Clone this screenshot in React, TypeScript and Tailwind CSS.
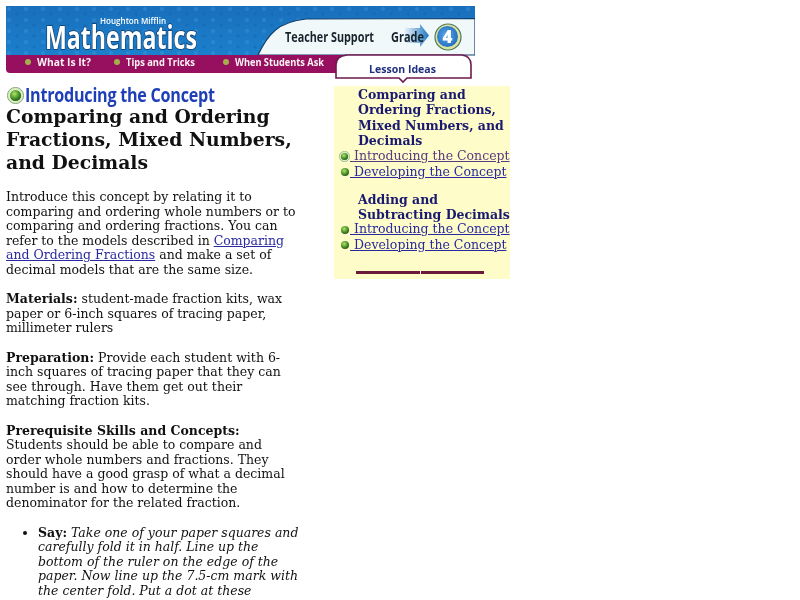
import React from "react";

function Ball({ size = 10, ring = false }: { size?: number; ring?: boolean }) {
  const id = ring ? "ballRing" + size : "ballPlain";
  return (
    <svg width={size} height={size} viewBox="0 0 20 20" className="shrink-0">
      <defs>
        <radialGradient id={id} cx="0.4" cy="0.35" r="0.7">
          <stop offset="0" stopColor="#b6e26a" />
          <stop offset="0.55" stopColor="#4f9a2c" />
          <stop offset="1" stopColor="#1f4d1c" />
        </radialGradient>
      </defs>
      {ring && <circle cx="10" cy="10" r="9.5" fill="#dcefc4" stroke="#6f9a63" strokeWidth="1" />}
      <circle cx="10" cy="10" r={ring ? 6.5 : 8} fill={`url(#${id})`} />
    </svg>
  );
}

const ban = "'Open Sans', sans-serif";

function Banner() {
  return (
    <svg width="470" height="82" viewBox="0 0 470 82" className="block">
      <defs>
        <linearGradient id="bb" x1="0" y1="0" x2="0" y2="1">
          <stop offset="0" stopColor="#1a6fbc" />
          <stop offset="1" stopColor="#1b80cc" />
        </linearGradient>
        <pattern id="mott" width="17" height="11" patternUnits="userSpaceOnUse">
          <circle cx="3" cy="3" r="2" fill="#4fa3e2" opacity="0.3" />
          <circle cx="11" cy="8" r="1.8" fill="#0f5ea8" opacity="0.35" />
        </pattern>
        <radialGradient id="four" cx="0.45" cy="0.45" r="0.6">
          <stop offset="0" stopColor="#5fa8e6" />
          <stop offset="1" stopColor="#1f6cc0" />
        </radialGradient>
        <linearGradient id="arrow" x1="0" y1="0" x2="1" y2="0">
          <stop offset="0" stopColor="#ffffff" />
          <stop offset="1" stopColor="#2078c4" />
        </linearGradient>
      </defs>
      <rect x="0" y="0" width="469" height="49" fill="url(#bb)" />
      <rect x="0" y="0" width="469" height="49" fill="url(#mott)" />
      <path d="M252 49 C262 28 272 16 300 13 L469 12.5 L469 49 Z" fill="#f1f8fa" stroke="#12406f" strokeWidth="1.2" />
      <rect x="469" y="12" width="2" height="38" fill="#ffffff" />
      <path d="M0 49 H341 V67 H4 Q0 67 0 63 Z" fill="#96105f" />
      <text x="94" y="18" fontFamily={ban} fontSize="8" fill="#ffffff" fontWeight="600" textLength="66" lengthAdjust="spacingAndGlyphs">Houghton Mifflin</text>
      <text x="39" y="43" fontFamily={ban} fontSize="33" fill="#ffffff" fontWeight="700" textLength="152" lengthAdjust="spacingAndGlyphs" stroke="#0d3a6b" strokeWidth="1.6" style={{ paintOrder: "stroke" }}>Mathematics</text>
      <text x="279" y="36" fontFamily={ban} fontSize="14.5" fill="#17232c" fontWeight="700" textLength="89" lengthAdjust="spacingAndGlyphs">Teacher Support</text>
      <path d="M396 22 H414 V18 L423 29.5 L414 41 V37 H396 Z" fill="url(#arrow)" />
      <text x="385" y="36" fontFamily={ban} fontSize="14" fill="#17232c" fontWeight="700" textLength="33" lengthAdjust="spacingAndGlyphs">Grade</text>
      <circle cx="442" cy="31" r="13" fill="#dfe3a0" stroke="#4a7a5a" strokeWidth="1.2" />
      <circle cx="441.5" cy="30.5" r="10.5" fill="url(#four)" />
      <text x="441.5" y="37" textAnchor="middle" fontFamily={ban} fontSize="17" fill="#ffffff" fontWeight="800">4</text>
      {[22, 111, 220].map((x) => (
        <circle key={x} cx={x} cy={56} r="3" fill="#a5ad4c" />
      ))}
      <text x="31" y="60" fontFamily={ban} fontSize="11" fill="#fdf3f5" fontWeight="700" textLength="54" lengthAdjust="spacingAndGlyphs">What Is It?</text>
      <text x="120" y="60" fontFamily={ban} fontSize="11" fill="#fdf3f5" fontWeight="700" textLength="69" lengthAdjust="spacingAndGlyphs">Tips and Tricks</text>
      <text x="229" y="60" fontFamily={ban} fontSize="11" fill="#fdf3f5" fontWeight="700" textLength="89" lengthAdjust="spacingAndGlyphs">When Students Ask</text>
      <path d="M330 72 V59 Q330 50 341 49 H456 Q465 50 465 59 V72 H401 L397 76 L393 72 Z" fill="#ffffff" stroke="#6e1a4e" strokeWidth="1.6" />
      <text x="363" y="67" fontFamily={ban} fontSize="10.5" fill="#20307f" fontWeight="700" textLength="67" lengthAdjust="spacingAndGlyphs">Lesson Ideas</text>
    </svg>
  );
}

function NavLink({ text, current, ring }: { text: string; current?: boolean; ring?: boolean }) {
  return (
    <div className={`flex items-center h-[15.2px] whitespace-nowrap ${ring ? "-ml-[19px] mt-[1px]" : "-ml-[18px]"}`}>
      <Ball size={ring ? 11 : 10} ring={ring} />
      <a href="#" className={`underline ${current ? "text-[#5a3a80]" : "text-[#2a2aa0]"}`}>
        {"\u00a0"}
        {text}
      </a>
    </div>
  );
}

export default function App() {
  return (
    <div className="w-[800px] h-[600px] overflow-hidden bg-white font-['DejaVu_Serif',serif] text-[12.5px] leading-[14.6px] text-[#111] pt-[6px] pl-[6px] blur-[0.4px]">
      <Banner />
      <div className="flex items-start -mt-[2px]">
        <div className="w-[300px] shrink-0 whitespace-nowrap">
          <div className="flex items-center gap-[1px] h-[24px] -mt-[3px] ml-[1px]">
            <Ball size={17} ring />
            <span className="inline-block origin-left scale-x-[0.85] font-['Open_Sans',sans-serif] font-bold text-[19px] tracking-[-0.3px] text-[#1f3fb8]">Introducing the Concept</span>
          </div>
          <h1 className="font-bold text-[18.8px] leading-[23px] -mt-[2px]">
            Comparing and Ordering<br />Fractions, Mixed Numbers,<br />and Decimals
          </h1>
          <p className="mt-[16px]">
            Introduce this concept by relating it to<br />comparing and ordering whole numbers or to<br />comparing and ordering fractions. You can<br />refer to the models described in <a href="#" className="underline text-[#2a2aa0]">Comparing<br />and Ordering Fractions</a> and make a set of<br />decimal models that are the same size.
          </p>
          <p className="mt-[14.6px]">
            <b>Materials:</b> student-made fraction kits, wax<br />paper or 6-inch squares of tracing paper,<br />millimeter rulers
          </p>
          <p className="mt-[14.6px]">
            <b>Preparation:</b> Provide each student with 6-<br />inch squares of tracing paper that they can<br />see through. Have them get out their<br />matching fraction kits.
          </p>
          <p className="mt-[14.6px]">
            <b>Prerequisite Skills and Concepts:</b><br />Students should be able to compare and<br />order whole numbers and fractions. They<br />should have a good grasp of what a decimal<br />number is and how to determine the<br />denominator for the related fraction.
          </p>
          <ul className="mt-[14.6px] pl-[32px] list-disc">
            <li>
              <b>Say:</b> <i>Take one of your paper squares and<br />carefully fold it in half. Line up the<br />bottom of the ruler on the edge of the<br />paper. Now line up the 7.5-cm mark with<br />the center fold. Put a dot at these</i>
            </li>
          </ul>
        </div>
        <aside className="w-[176px] h-[193px] ml-[28px] bg-[#fefcc8] pl-[24px] pt-[1px] shrink-0 whitespace-nowrap">
          <h2 className="font-bold text-[#191970] leading-[15.3px]">
            Comparing and<br />Ordering Fractions,<br />Mixed Numbers, and<br />Decimals
          </h2>
          <NavLink text="Introducing the Concept" current ring />
          <NavLink text="Developing the Concept" />
          <h2 className="font-bold text-[#191970] leading-[15.3px] mt-[12px]">
            Adding and<br />Subtracting Decimals
          </h2>
          <NavLink text="Introducing the Concept" />
          <NavLink text="Developing the Concept" />
          <div className="flex gap-[1px] h-[3px] w-[128px] mt-[18px] -ml-[2px]">
            <div className="w-[64px] bg-[#6b1a3c]" />
            <div className="w-[63px] bg-[#6b1a3c]" />
          </div>
        </aside>
      </div>
    </div>
  );
}
